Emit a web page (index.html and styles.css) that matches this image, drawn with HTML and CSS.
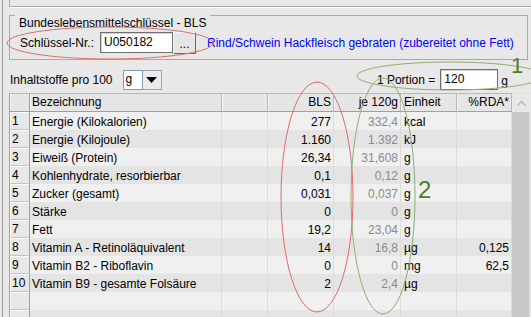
FILE: index.html
```html
<!DOCTYPE html>
<html lang="de">
<head>
<meta charset="utf-8">
<title>BLS</title>
<link rel="stylesheet" href="styles.css">
</head>
<body>
<div class="window">
  <div class="prev-panel"></div>
  <div class="bls-box">
    <div class="bls-title">Bundeslebensmittelschlüssel - BLS</div>
    <div class="key-row">
      <span class="label">Schlüssel-Nr.:</span>
      <div class="text-field key-field">U050182</div>
      <div class="dots-btn">...</div>
      <span class="food-link">Rind/Schwein Hackfleisch gebraten (zubereitet ohne Fett)</span>
    </div>
  </div>
  <div class="options-row">
    <span class="per-label">Inhaltstoffe pro 100</span>
    <div class="combo">
      <span class="combo-value">g</span>
      <span class="combo-arrow"><svg width="11" height="6" viewBox="0 0 11 6"><path d="M0 0H11L5.5 6Z" fill="#000"/></svg></span>
    </div>
    <div class="portion">
      <span>1 Portion =</span>
      <div class="text-field portion-field">120</div>
      <span class="unit">g</span>
    </div>
  </div>
  <div class="table-area">
    <table class="grid">
      <colgroup>
        <col class="c-num"><col class="c-name"><col class="c-blank"><col class="c-bls"><col class="c-per"><col class="c-unit"><col class="c-rda">
      </colgroup>
      <thead>
        <tr>
          <th class="num"></th>
          <th class="left">Bezeichnung</th>
          <th></th>
          <th>BLS</th>
          <th>je 120g</th>
          <th class="left unit-h">Einheit</th>
          <th>%RDA*</th>
        </tr>
      </thead>
      <tbody>
        <tr><td class="num">1</td><td class="name">Energie (Kilokalorien)</td><td></td><td class="val">277</td><td class="val per">332,4</td><td class="unit-c">kcal</td><td class="val"></td></tr>
        <tr><td class="num">2</td><td class="name">Energie (Kilojoule)</td><td></td><td class="val">1.160</td><td class="val per">1.392</td><td class="unit-c">kJ</td><td class="val"></td></tr>
        <tr><td class="num">3</td><td class="name">Eiweiß (Protein)</td><td></td><td class="val">26,34</td><td class="val per">31,608</td><td class="unit-c">g</td><td class="val"></td></tr>
        <tr><td class="num">4</td><td class="name">Kohlenhydrate, resorbierbar</td><td></td><td class="val">0,1</td><td class="val per">0,12</td><td class="unit-c">g</td><td class="val"></td></tr>
        <tr><td class="num">5</td><td class="name">Zucker (gesamt)</td><td></td><td class="val">0,031</td><td class="val per">0,037</td><td class="unit-c">g</td><td class="val"></td></tr>
        <tr><td class="num">6</td><td class="name">Stärke</td><td></td><td class="val">0</td><td class="val per">0</td><td class="unit-c">g</td><td class="val"></td></tr>
        <tr><td class="num">7</td><td class="name">Fett</td><td></td><td class="val">19,2</td><td class="val per">23,04</td><td class="unit-c">g</td><td class="val"></td></tr>
        <tr><td class="num">8</td><td class="name">Vitamin A - Retinoläquivalent</td><td></td><td class="val">14</td><td class="val per">16,8</td><td class="unit-c">µg</td><td class="val">0,125</td></tr>
        <tr><td class="num">9</td><td class="name">Vitamin B2 - Riboflavin</td><td></td><td class="val">0</td><td class="val per">0</td><td class="unit-c">mg</td><td class="val">62,5</td></tr>
        <tr><td class="num">10</td><td class="name">Vitamin B9 - gesamte Folsäure</td><td></td><td class="val">2</td><td class="val per">2,4</td><td class="unit-c">µg</td><td class="val"></td></tr>
        <tr><td class="num"></td><td class="name"></td><td></td><td class="val"></td><td class="val per"></td><td class="unit-c"></td><td class="val"></td></tr>
        <tr><td class="num"></td><td class="name"></td><td></td><td class="val"></td><td class="val per"></td><td class="unit-c"></td><td class="val"></td></tr>
      </tbody>
    </table>
    <div class="scrollbar">
      <div class="sb-up"><svg width="9" height="6" viewBox="0 0 9 6"><path d="M0.5 5.5L4.5 1.5L8.5 5.5" fill="none" stroke="#b4b4b4" stroke-width="1.3"/></svg></div>
      <div class="sb-track"></div>
    </div>
  </div>
</div>
<svg class="annotations" width="531" height="317" viewBox="0 0 531 317">
  <ellipse cx="110" cy="43" rx="103" ry="16" fill="none" stroke="#e26a6a" stroke-width="1"/>
  <ellipse cx="450" cy="76" rx="93" ry="14" fill="none" stroke="#8fae72" stroke-width="1"/>
  <ellipse cx="317" cy="197" rx="36" ry="115" fill="none" stroke="#e26a6a" stroke-width="1"/>
  <ellipse cx="383" cy="196" rx="32" ry="118" fill="none" stroke="#8fae72" stroke-width="1"/>
  <text x="511" y="73" class="mark">1</text>
  <text x="418" y="198" class="mark mark-2">2</text>
</svg>
</body>
</html>
```
FILE: styles.css
```css
body {
  margin: 0;
  width: 531px;
  height: 317px;
  overflow: hidden;
  position: relative;
  background: #e8e8e8;
  color: #000;
  font: 12px "Liberation Sans", Arial, sans-serif;
}

.window {
  margin-left: 2px;
  border-left: 1px solid #a0a0a0;
  padding-left: 6px;
  height: 317px;
  box-sizing: border-box;
}

.prev-panel {
  height: 6px;
  border-left: 1px solid #a8a8a8;
  border-bottom: 1px solid #a8a8a8;
  box-shadow: 0 1px 0 #ffffff;
}

.bls-box {
  margin-top: 8px;
  margin-right: 3px;
  border: 1px solid #a8a8a8;
  padding-bottom: 5px;
}

.bls-title {
  width: fit-content;
  margin: -1px 0 0 5px;
  padding: 0 4px;
  background: #e8e8e8;
  line-height: 16px;
}

.key-row {
  display: flex;
  align-items: flex-start;
  padding-left: 10px;
  margin-top: 1px;
  height: 22px;
}

.label {
  align-self: center;
  margin-right: 6px;
}

.text-field {
  box-sizing: border-box;
  height: 21px;
  background: #ffffff;
  border: 1px solid #6f6f6f;
  box-shadow: inset 1px 1px 0 #d4d4d4;
  padding: 0 3px;
  line-height: 19px;
}

.key-field {
  width: 73px;
}

.dots-btn {
  box-sizing: border-box;
  width: 23px;
  height: 22px;
  border: 1px solid;
  border-color: #f4f4f4 #6a6a6a #6a6a6a #f4f4f4;
  background: #e6e6e6;
  text-align: center;
  line-height: 22px;
}

.food-link {
  align-self: center;
  margin-left: 11px;
  color: #0000ff;
}

.options-row {
  display: flex;
  align-items: center;
  height: 21px;
  margin-top: 9px;
  padding-left: 1px;
  padding-right: 23px;
}

.per-label {
  margin-right: 10px;
}

.combo {
  display: flex;
  height: 20px;
  width: 39px;
}

.combo-value {
  box-sizing: border-box;
  width: 20px;
  background: #ffffff;
  border: 1px solid #7f9db9;
  padding-left: 2px;
  line-height: 17px;
}

.combo-arrow {
  box-sizing: border-box;
  width: 19px;
  display: flex;
  align-items: center;
  justify-content: center;
  background: #ececec;
  border: 1px solid #9aa7b6;
  border-left: none;
}

.portion {
  margin-left: auto;
  display: flex;
  align-items: center;
}

.portion-field {
  width: 58px;
  margin-left: 5px;
}

.unit {
  margin-left: 3px;
  margin-top: 3px;
}

.table-area {
  display: flex;
  margin-top: 3px;
}

.grid {
  width: 503px;
  table-layout: fixed;
  border-collapse: separate;
  border-spacing: 0;
}

.c-num { width: 21px; }
.c-name { width: 192px; }
.c-blank { width: 46px; }
.c-bls { width: 66px; }
.c-per { width: 67px; }
.c-unit { width: 56px; }
.c-rda { width: 55px; }

.grid th {
  box-sizing: border-box;
  height: 19px;
  padding: 0 2px;
  font-weight: normal;
  text-align: right;
  line-height: 17px;
  background: #e6e6e6;
  border-top: 1px solid #b8b8b8;
  border-bottom: 1px solid #a0a0a0;
  border-right: 1px solid #b8b8b8;
  box-shadow: inset 1px 0 0 #f6f6f6;
  white-space: nowrap;
  overflow: hidden;
}

.grid th.left {
  text-align: left;
}

.grid th.unit-h {
  padding-left: 3px;
}

.grid td {
  box-sizing: border-box;
  height: 18px;
  padding: 3px 2px 0;
  line-height: 15px;
  border-right: 1px solid #dcdcdc;
  white-space: nowrap;
  overflow: hidden;
}

.grid tbody tr:nth-child(odd) td {
  background: #f0f0f0;
}

.grid tbody tr:nth-child(even) td {
  background: #e4e4e4;
}

.grid .num {
  border-left: 1px solid #a0a0a0;
  border-right: 1px solid #a0a0a0;
}

.grid tbody tr td.num {
  background: #e8e8e8;
  border-bottom: 1px solid #c4c4c4;
  box-shadow: inset 1px 1px 0 #fafafa;
  padding-left: 2px;
  padding-top: 2px;
}

.grid td.val {
  text-align: right;
}

.grid td.per {
  color: #8a8a8a;
}

.grid td.unit-c {
  padding-left: 3px;
}

.scrollbar {
  width: 19px;
  display: flex;
  flex-direction: column;
}

.sb-up {
  box-sizing: border-box;
  height: 19px;
  display: flex;
  align-items: center;
  justify-content: center;
  background: #e8e8e8;
  border-top: 1px solid #e0e0e0;
}

.sb-track {
  flex: 1;
  height: 230px;
  background: #c8c8c8;
  border-right: 2px solid #e0e0e0;
}

.annotations {
  position: absolute;
  left: 0;
  top: 0;
  pointer-events: none;
}

.mark {
  font-family: "Liberation Sans", Arial, sans-serif;
  font-size: 22px;
  fill: #4e7d2b;
}

.mark-2 {
  font-size: 24px;
}
```
